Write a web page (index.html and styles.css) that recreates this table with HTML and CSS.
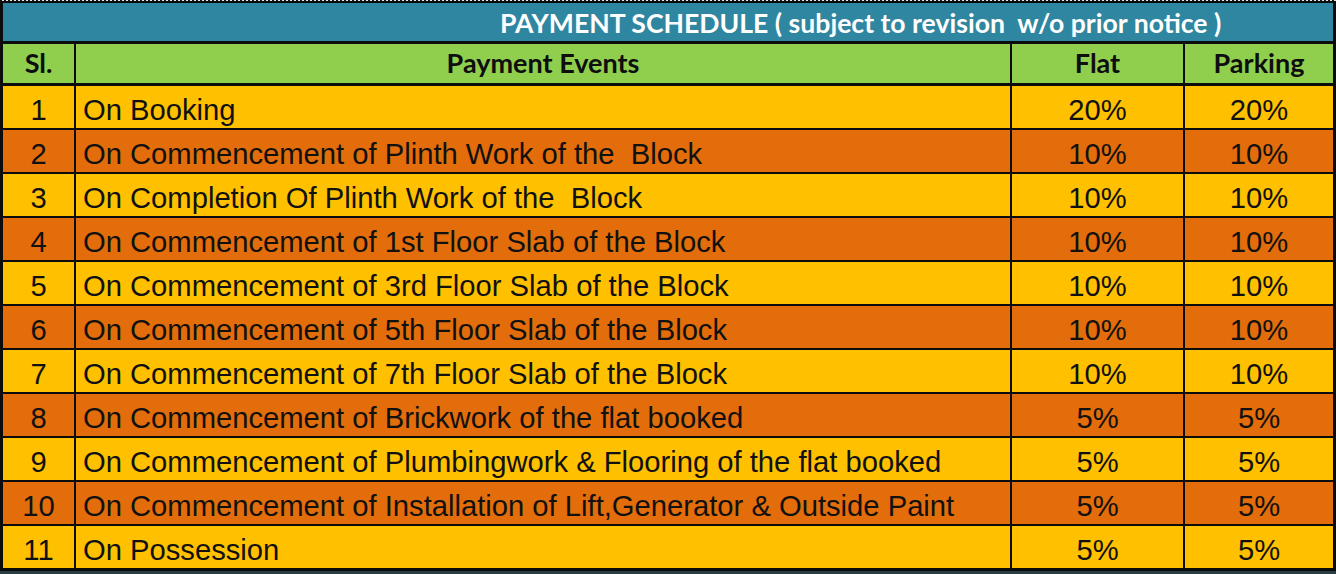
FILE: index.html
```html
<!DOCTYPE html>
<html>
<head>
<meta charset="utf-8">
<link rel="stylesheet" href="styles.css">
</head>
<body>
<div class="page">
  <div class="dots"></div>
  <div class="sheet">
    <div class="title">PAYMENT SCHEDULE ( subject to revision  w/o prior notice )</div>
    <div class="hd">Sl.</div>
    <div class="hd">Payment Events</div>
    <div class="hd">Flat</div>
    <div class="hd">Parking</div>

    <div class="c y num">1</div><div class="c y ev">On Booking</div><div class="c y num">20%</div><div class="c y num">20%</div>
    <div class="c o num">2</div><div class="c o ev">On Commencement of Plinth Work of the  Block</div><div class="c o num">10%</div><div class="c o num">10%</div>
    <div class="c y num">3</div><div class="c y ev">On Completion Of Plinth Work of the  Block</div><div class="c y num">10%</div><div class="c y num">10%</div>
    <div class="c o num">4</div><div class="c o ev">On Commencement of 1st Floor Slab of the Block</div><div class="c o num">10%</div><div class="c o num">10%</div>
    <div class="c y num">5</div><div class="c y ev">On Commencement of 3rd Floor Slab of the Block</div><div class="c y num">10%</div><div class="c y num">10%</div>
    <div class="c o num">6</div><div class="c o ev">On Commencement of 5th Floor Slab of the Block</div><div class="c o num">10%</div><div class="c o num">10%</div>
    <div class="c y num">7</div><div class="c y ev">On Commencement of 7th Floor Slab of the Block</div><div class="c y num">10%</div><div class="c y num">10%</div>
    <div class="c o num">8</div><div class="c o ev">On Commencement of Brickwork of the flat booked</div><div class="c o num">5%</div><div class="c o num">5%</div>
    <div class="c y num">9</div><div class="c y ev">On Commencement of Plumbingwork &amp; Flooring of the flat booked</div><div class="c y num">5%</div><div class="c y num">5%</div>
    <div class="c o num">10</div><div class="c o ev">On Commencement of Installation of Lift,Generator &amp; Outside Paint</div><div class="c o num">5%</div><div class="c o num">5%</div>
    <div class="c y num">11</div><div class="c y ev">On Possession</div><div class="c y num">5%</div><div class="c y num">5%</div>
  </div>
</div>
</body>
</html>
```

FILE: styles.css
```css
* { box-sizing: border-box; }
html, body { margin: 0; padding: 0; }
body {
  width: 1336px;
  height: 574px;
  overflow: hidden;
  background: #2a3d42;
}
.page { width: 1336px; }
.dots {
  height: 1px;
  background: repeating-linear-gradient(90deg, #111 0 2px, #e8e8e8 2px 4px);
}
.sheet {
  display: grid;
  grid-template-columns: 71px 934px 171px 148px;
  grid-template-rows: 39px 40px repeat(11, 42px);
  column-gap: 2px;
  row-gap: 2px;
  background: #0c0c0c;
  padding: 2px 3px 3px 3px;
}
.title {
  grid-column: 1 / -1;
  background: #2f86a0;
  color: #fff;
  font-family: "Lato", "Open Sans", sans-serif;
  font-weight: 700;
  font-size: 26.6px;
  white-space: pre;
  padding-left: 497px;
  padding-top: 2px;
  display: flex;
  align-items: center;
  margin-bottom: 1px;
}
.hd {
  background: #90cf4e;
  color: #0e0e0e;
  font-family: "Lato", "Open Sans", sans-serif;
  font-weight: 700;
  font-size: 27px;
  display: flex;
  align-items: center;
  justify-content: center;
  padding-bottom: 3px;
  margin-bottom: 1px;
}
.c {
  font-family: "Liberation Sans", Arial, sans-serif;
  font-size: 29.2px;
  color: #111;
  display: flex;
  align-items: center;
  white-space: pre;
  padding-top: 6px;
}
.y { background: #ffc000; }
.o { background: #e36c0b; }
.num { justify-content: center; }
.ev { padding-left: 7px; }
```
